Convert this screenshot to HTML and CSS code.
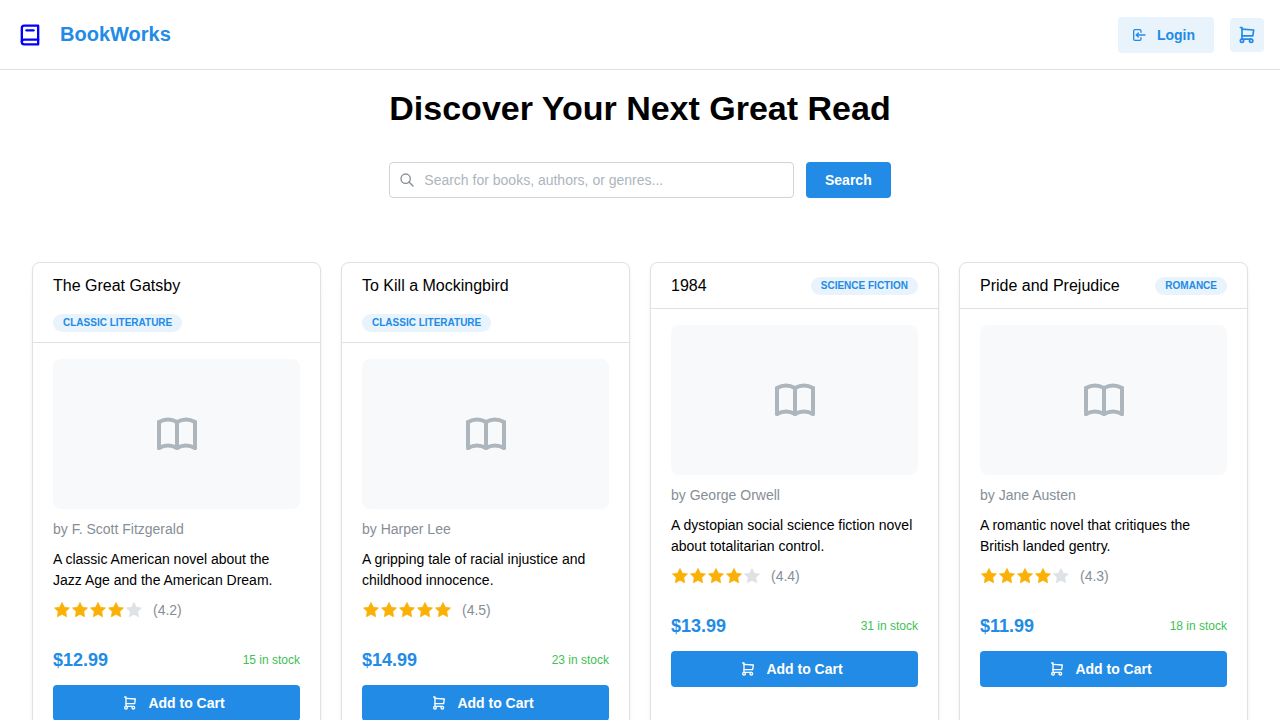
FILE: index.html
```html
<!DOCTYPE html>
<html lang="en">
<head>
<meta charset="utf-8">
<meta name="viewport" content="width=device-width, initial-scale=1">
<title>BookWorks</title>
<link rel="stylesheet" href="styles.css">
</head>
<body>
<svg class="sprite" aria-hidden="true">
  <symbol id="i-brand" viewBox="0 0 24 24"><path d="M19 4v16h-12a2 2 0 0 1 -2 -2v-12a2 2 0 0 1 2 -2h12z"/><path d="M19 16h-12a2 2 0 0 0 -2 2"/><path d="M9 8h6"/></symbol>
  <symbol id="i-login" viewBox="0 0 24 24"><path d="M15 8v-2a2 2 0 0 0 -2 -2h-7a2 2 0 0 0 -2 2v12a2 2 0 0 0 2 2h7a2 2 0 0 0 2 -2v-2"/><path d="M21 12h-13l3 -3"/><path d="M11 15l-3 -3"/></symbol>
  <symbol id="i-cart" viewBox="0 0 24 24"><circle cx="6" cy="19" r="2"/><circle cx="17" cy="19" r="2"/><path d="M17 17h-11v-14h-2"/><path d="M6 5l14 1l-1 7h-13"/></symbol>
  <symbol id="i-search" viewBox="0 0 24 24"><circle cx="10" cy="10" r="7"/><path d="M21 21l-6 -6"/></symbol>
  <symbol id="i-book" viewBox="0 0 24 24"><path d="M3 19a9 9 0 0 1 9 0a9 9 0 0 1 9 0"/><path d="M3 6a9 9 0 0 1 9 0a9 9 0 0 1 9 0"/><path d="M3 6v13"/><path d="M12 6v13"/><path d="M21 6v13"/></symbol>
  <symbol id="i-star" viewBox="0 0 24 24"><path d="M12 17.75l-6.172 3.245l1.179 -6.873l-5 -4.867l6.9 -1l3.086 -6.253l3.086 6.253l6.9 1l-5 4.867l1.179 6.873z"/></symbol>
</svg>

<header class="header">
  <div class="brand">
    <a class="brand-link" href="#" aria-label="Home"><svg class="icon icon-brand"><use href="#i-brand"/></svg></a>
    <span class="brand-name">BookWorks</span>
  </div>
  <div class="actions">
    <button class="button button-light with-icon" type="button"><svg class="icon"><use href="#i-login"/></svg>Login</button>
    <button class="cart-button" type="button" aria-label="Cart"><svg class="icon icon-cart"><use href="#i-cart"/></svg></button>
  </div>
</header>

<main class="main">
  <section class="hero">
    <h1 class="hero-title">Discover Your Next Great Read</h1>
    <form class="search">
      <label class="search-field">
        <svg class="icon"><use href="#i-search"/></svg>
        <input class="search-input" type="text" aria-label="Search books" placeholder="Search for books, authors, or genres...">
      </label>
      <button class="button button-filled" type="button">Search</button>
    </form>
  </section>

  <section class="books">
    <article class="card">
      <header class="card-header"><h2 class="card-title">The Great Gatsby</h2><span class="badge">CLASSIC LITERATURE</span></header>
      <div class="card-body">
        <div class="cover"><svg class="icon icon-cover"><use href="#i-book"/></svg></div>
        <p class="author">by F. Scott Fitzgerald</p>
        <p class="description">A classic American novel about the Jazz Age and the American Dream.</p>
        <div class="rating">
          <div class="stars"><svg class="star on"><use href="#i-star"/></svg><svg class="star on"><use href="#i-star"/></svg><svg class="star on"><use href="#i-star"/></svg><svg class="star on"><use href="#i-star"/></svg><svg class="star"><use href="#i-star"/></svg></div>
          <span>(4.2)</span>
        </div>
        <div class="offer"><span class="price">$12.99</span><span class="stock">15 in stock</span></div>
        <button class="button button-filled with-icon" type="button"><svg class="icon"><use href="#i-cart"/></svg>Add to Cart</button>
      </div>
    </article>

    <article class="card">
      <header class="card-header"><h2 class="card-title">To Kill a Mockingbird</h2><span class="badge">CLASSIC LITERATURE</span></header>
      <div class="card-body">
        <div class="cover"><svg class="icon icon-cover"><use href="#i-book"/></svg></div>
        <p class="author">by Harper Lee</p>
        <p class="description">A gripping tale of racial injustice and childhood innocence.</p>
        <div class="rating">
          <div class="stars"><svg class="star on"><use href="#i-star"/></svg><svg class="star on"><use href="#i-star"/></svg><svg class="star on"><use href="#i-star"/></svg><svg class="star on"><use href="#i-star"/></svg><svg class="star on"><use href="#i-star"/></svg></div>
          <span>(4.5)</span>
        </div>
        <div class="offer"><span class="price">$14.99</span><span class="stock">23 in stock</span></div>
        <button class="button button-filled with-icon" type="button"><svg class="icon"><use href="#i-cart"/></svg>Add to Cart</button>
      </div>
    </article>

    <article class="card">
      <header class="card-header"><h2 class="card-title">1984</h2><span class="badge">SCIENCE FICTION</span></header>
      <div class="card-body">
        <div class="cover"><svg class="icon icon-cover"><use href="#i-book"/></svg></div>
        <p class="author">by George Orwell</p>
        <p class="description">A dystopian social science fiction novel about totalitarian control.</p>
        <div class="rating">
          <div class="stars"><svg class="star on"><use href="#i-star"/></svg><svg class="star on"><use href="#i-star"/></svg><svg class="star on"><use href="#i-star"/></svg><svg class="star on"><use href="#i-star"/></svg><svg class="star"><use href="#i-star"/></svg></div>
          <span>(4.4)</span>
        </div>
        <div class="offer"><span class="price">$13.99</span><span class="stock">31 in stock</span></div>
        <button class="button button-filled with-icon" type="button"><svg class="icon"><use href="#i-cart"/></svg>Add to Cart</button>
      </div>
    </article>

    <article class="card">
      <header class="card-header"><h2 class="card-title">Pride and Prejudice</h2><span class="badge">ROMANCE</span></header>
      <div class="card-body">
        <div class="cover"><svg class="icon icon-cover"><use href="#i-book"/></svg></div>
        <p class="author">by Jane Austen</p>
        <p class="description">A romantic novel that critiques the British landed gentry.</p>
        <div class="rating">
          <div class="stars"><svg class="star on"><use href="#i-star"/></svg><svg class="star on"><use href="#i-star"/></svg><svg class="star on"><use href="#i-star"/></svg><svg class="star on"><use href="#i-star"/></svg><svg class="star"><use href="#i-star"/></svg></div>
          <span>(4.3)</span>
        </div>
        <div class="offer"><span class="price">$11.99</span><span class="stock">18 in stock</span></div>
        <button class="button button-filled with-icon" type="button"><svg class="icon"><use href="#i-cart"/></svg>Add to Cart</button>
      </div>
    </article>
  </section>
</main>
</body>
</html>
```

FILE: styles.css
```css
:root {
  --blue: #228be6;
  --blue-light: #e9f3fc;
  --border: #dee2e6;
  --dimmed: #868e96;
  --placeholder: #adb5bd;
}

*, *::before, *::after { box-sizing: border-box; }

body {
  margin: 0;
  font-family: "Liberation Sans", Arial, sans-serif;
  font-size: 14px;
  line-height: 20px;
  color: #000;
  background: #fff;
}

h1, h2, p { margin: 0; }

button, input { font: inherit; }

.sprite { display: none; }

.icon {
  display: block;
  flex: none;
  width: 16px;
  height: 16px;
  fill: none;
  stroke: currentColor;
  stroke-width: 2;
  stroke-linecap: round;
  stroke-linejoin: round;
}
.icon-brand { width: 28px; height: 28px; }
.icon-cart { width: 20px; height: 20px; }
.icon-cover { width: 48px; height: 48px; }

/* Header */
.header {
  display: flex;
  align-items: center;
  justify-content: space-between;
  height: 70px;
  padding: 0 16px;
  border-bottom: 1px solid var(--border);
}
.brand, .actions { display: flex; align-items: center; gap: 16px; }
.brand-link { color: #0000ff; }
.brand-name {
  font-size: 20px;
  line-height: 31px;
  font-weight: 700;
  color: var(--blue);
}

/* Buttons */
.button {
  display: flex;
  align-items: center;
  justify-content: center;
  gap: 10px;
  height: 36px;
  padding: 0 18px;
  border: 1px solid transparent;
  border-radius: 4px;
  font-weight: 700;
  cursor: pointer;
}
.with-icon { padding-left: 12px; }
.button-filled { background: var(--blue); color: #fff; }
.button-light { background: var(--blue-light); color: var(--blue); }
.cart-button {
  display: flex;
  align-items: center;
  justify-content: center;
  width: 34px;
  height: 34px;
  padding: 0;
  border: 0;
  border-radius: 4px;
  background: var(--blue-light);
  color: var(--blue);
  cursor: pointer;
}

/* Hero */
.main {
  display: flex;
  flex-direction: column;
  gap: 64px;
  padding: 16px 32px;
}
.hero {
  display: flex;
  flex-direction: column;
  gap: 32px;
  align-self: center;
}
.hero-title { font-size: 34px; line-height: 44px; font-weight: 700; text-align: center; }
.search { display: flex; gap: 12px; }
.search-field {
  display: flex;
  flex: 1;
  align-items: center;
  gap: 9px;
  height: 36px;
  padding: 0 9px;
  border: 1px solid #ced4da;
  border-radius: 4px;
  color: var(--dimmed);
}
.search-input {
  flex: 1;
  min-width: 0;
  padding: 0;
  border: 0;
  outline: 0;
  background: none;
  color: #000;
}
.search-input::placeholder { color: var(--placeholder); opacity: 1; }

/* Book cards */
.books {
  display: grid;
  grid-template-columns: repeat(auto-fit, minmax(260px, 1fr));
  gap: 20px;
}
.card {
  border: 1px solid var(--border);
  border-radius: 8px;
  background: #fff;
  box-shadow: 0 1px 3px rgba(0, 0, 0, 0.05), 0 10px 15px -5px rgba(0, 0, 0, 0.05), 0 7px 7px -5px rgba(0, 0, 0, 0.04);
}
.card-header {
  display: flex;
  flex-wrap: wrap;
  align-items: center;
  justify-content: space-between;
  gap: 16px;
  padding: 10px 20px;
  border-bottom: 1px solid var(--border);
}
.card-title { font-size: 16px; line-height: 25px; font-weight: 400; }
.badge {
  padding: 0 10px;
  border-radius: 9px;
  background: var(--blue-light);
  color: var(--blue);
  font-size: 10px;
  line-height: 18px;
  font-weight: 700;
}
.card-body {
  display: flex;
  flex-direction: column;
  gap: 10px;
  padding: 16px 20px 20px;
}
.cover {
  display: flex;
  align-items: center;
  justify-content: center;
  height: 150px;
  border-radius: 8px;
  background: #f8f9fa;
  color: var(--placeholder);
}
.author { color: var(--dimmed); }
.description { line-height: 21px; }
.rating {
  display: flex;
  align-items: center;
  gap: 10px;
  height: 18px;
  color: var(--dimmed);
}
.stars { display: flex; }
.star {
  width: 18px;
  height: 18px;
  color: var(--border);
  fill: currentColor;
  stroke: currentColor;
  stroke-width: 1;
  stroke-linejoin: round;
}
.star.on { color: #fab005; }
.offer {
  display: flex;
  align-items: center;
  justify-content: space-between;
  padding-top: 16px;
}
.price { font-size: 18px; line-height: 30px; font-weight: 700; color: var(--blue); }
.stock { font-size: 12px; color: #40c057; }
```
